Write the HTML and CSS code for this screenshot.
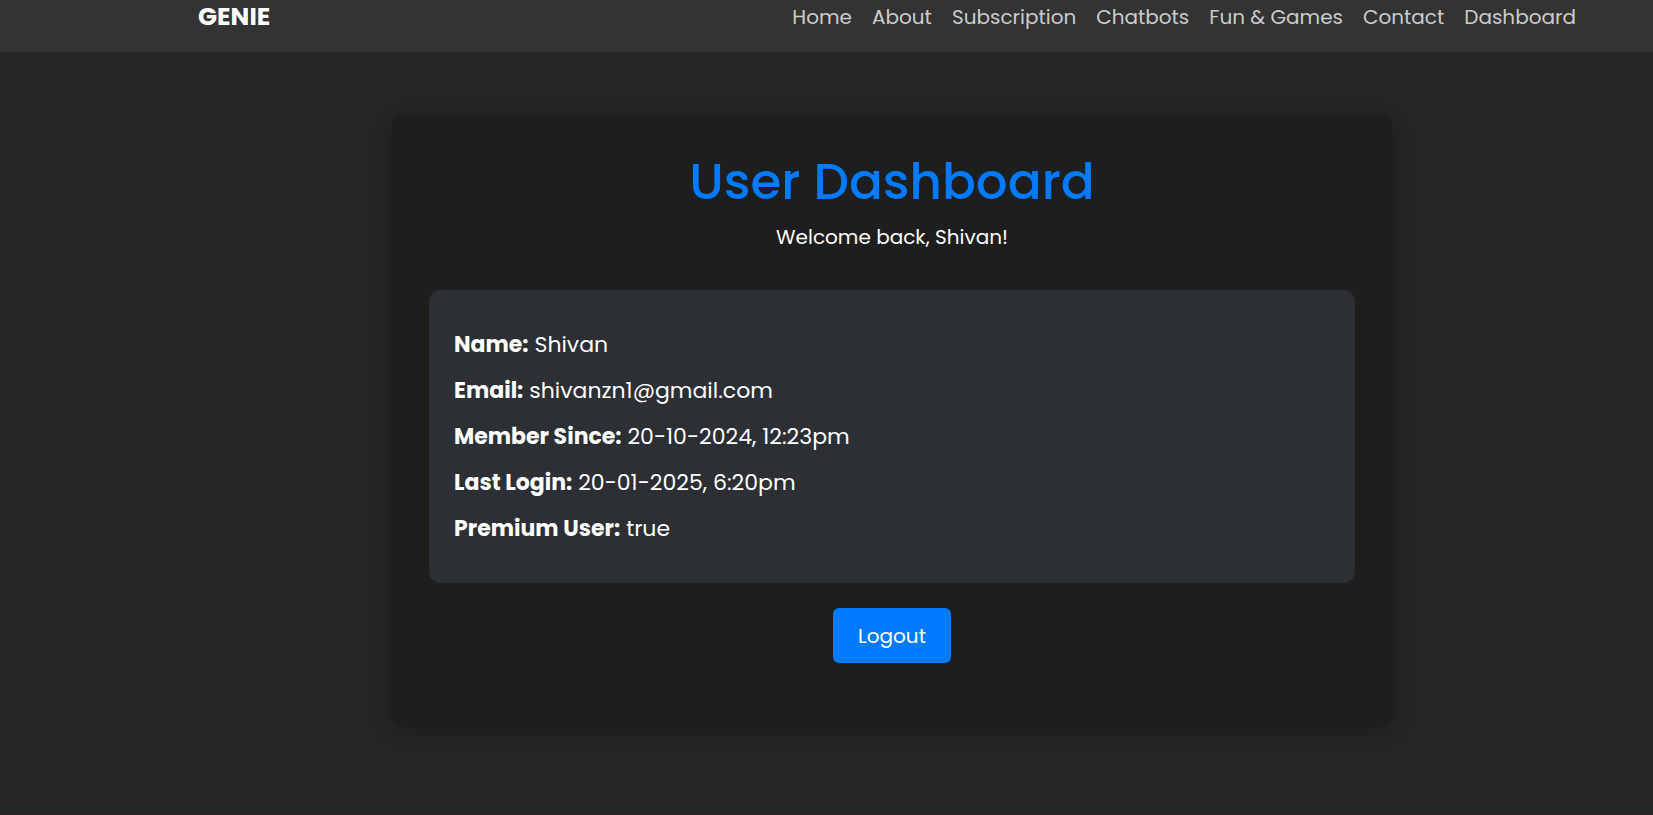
FILE: index.html
```html
<!DOCTYPE html>
<html lang="en">
<head>
<meta charset="utf-8">
<title>User Dashboard</title>
<link rel="stylesheet" href="styles.css">
</head>
<body>
<header class="navbar">
  <a class="brand" href="#">GENIE</a>
  <nav class="nav-links">
    <a href="#">Home</a>
    <a href="#">About</a>
    <a href="#">Subscription</a>
    <a href="#">Chatbots</a>
    <a href="#">Fun &amp; Games</a>
    <a href="#">Contact</a>
    <a href="#">Dashboard</a>
  </nav>
</header>
<main class="page">
  <section class="card">
    <h1 class="title">User Dashboard</h1>
    <p class="welcome">Welcome back, Shivan!</p>
    <div class="info">
      <p><strong>Name:</strong> Shivan</p>
      <p><strong>Email:</strong> shivanzn1@gmail.com</p>
      <p><strong>Member Since:</strong> 20-10-2024, 12:23pm</p>
      <p><strong>Last Login:</strong> 20-01-2025, 6:20pm</p>
      <p><strong>Premium User:</strong> true</p>
    </div>
    <button class="logout" type="button">Logout</button>
  </section>
</main>
</body>
</html>
```
FILE: styles.css
```css
* {
  box-sizing: border-box;
}

body {
  margin: 0;
  min-height: 100vh;
  display: flex;
  flex-direction: column;
  background: #252628;
  border-bottom: 1px solid #2b2528;
  color: #fff;
  font-family: Poppins, Inter, "Open Sans", sans-serif;
  font-size: 20px;
  line-height: 30px;
}

.navbar {
  display: flex;
  justify-content: space-between;
  align-items: flex-start;
  padding: 2px 77px 20px 198px;
  background: #333;
}

.brand {
  color: #fff;
  font-size: 25px;
  font-weight: 700;
  text-decoration: none;
}

.nav-links {
  display: flex;
  gap: 20px;
}

.nav-links a {
  color: #ccc;
  text-decoration: none;
}

.page {
  flex: 1;
  padding: 63px 0 63px 131px;
}

.card {
  max-width: 1000px;
  margin: 0 auto;
  padding: 37px 37px 63px;
  display: flex;
  flex-direction: column;
  align-items: center;
  background: #1e1e1e;
  border-radius: 12px;
  box-shadow: 0 5px 25px rgba(0, 0, 0, 0.3);
}

.title {
  margin: 0 0 10px;
  color: #007bff;
  font-size: 50px;
  font-weight: 500;
  line-height: 60px;
}

.welcome {
  margin: 0 0 38px;
}

.info {
  align-self: stretch;
  display: flex;
  flex-direction: column;
  gap: 12px;
  padding: 38px 25px 37px;
  margin-bottom: 25px;
  background: #2c2f33;
  border-radius: 12px;
  font-size: 22px;
  line-height: 34px;
}

.info p {
  margin: 0;
}

.info strong {
  font-weight: 700;
}

.logout {
  padding: 13px 25px 12px;
  border: 0;
  border-radius: 6px;
  background: #007bff;
  color: #fff;
  font: inherit;
  cursor: pointer;
}
```
